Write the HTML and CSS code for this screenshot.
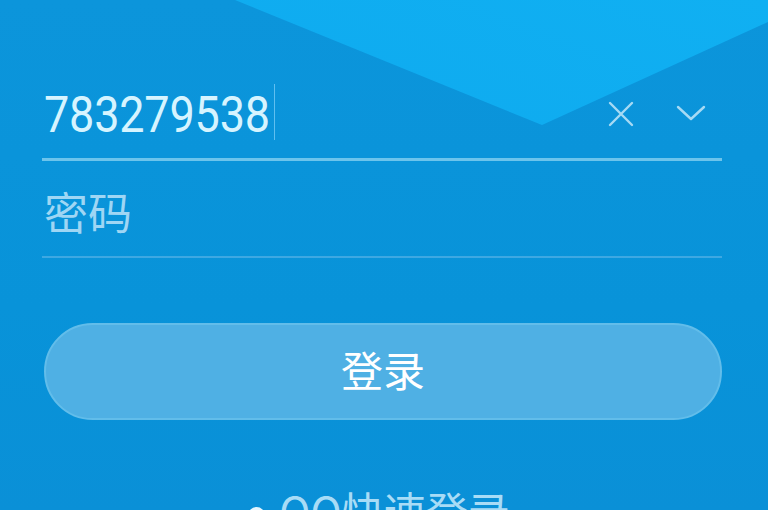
FILE: index.html
```html
<!DOCTYPE html>
<html lang="zh-CN">
<head>
<meta charset="utf-8">
<title>登录</title>
<link rel="stylesheet" href="styles.css">
</head>
<body>
<div class="screen">
  <div class="bg-shape"></div>
  <form class="login">
    <div class="field field-user">
      <span class="value">783279538</span><span class="caret"></span>
      <span class="spacer"></span>
      <svg class="icon icon-clear" viewBox="0 0 28 28" width="28" height="28"><path d="M3 3 L25 25 M25 3 L3 25" fill="none" stroke="currentColor" stroke-width="2.4" stroke-linecap="round"/></svg>
      <svg class="icon icon-down" viewBox="0 0 32 18" width="32" height="18"><path d="M3 3 L16 15 L29 3" fill="none" stroke="currentColor" stroke-width="2.4" stroke-linecap="round" stroke-linejoin="round"/></svg>
    </div>
    <div class="field field-pass">
      <span class="placeholder">密码</span>
    </div>
    <button type="button" class="btn-login">登录</button>
    <div class="quick"><span class="dot"></span>QQ快速登录</div>
  </form>
</div>
</body>
</html>
```
FILE: styles.css
```css
html, body {
  margin: 0;
  padding: 0;
}
body {
  width: 768px;
  height: 510px;
  overflow: hidden;
  font-family: Roboto, "Noto Sans CJK SC", sans-serif;
}
.screen {
  position: relative;
  width: 768px;
  height: 510px;
  overflow: hidden;
  background: linear-gradient(180deg, #0c95db 0%, #0893d9 60%, #0a90d7 100%);
}
.bg-shape {
  position: absolute;
  inset: 0;
  background: linear-gradient(200deg, #10b0f2 0%, #0ea7ed 60%, #0ca0e7 100%);
  clip-path: polygon(235px 0, 768px 0, 768px 22px, 542px 125px);
}
.login {
  position: relative;
  padding: 80px 46px 0 42px;
  display: flex;
  flex-direction: column;
}
.field {
  display: flex;
  align-items: center;
}
.field-user {
  height: 78px;
  border-bottom: 3px solid #6cc4ec;
  padding-left: 2px;
}
.value {
  font-family: Roboto, sans-serif;
  font-size: 45px;
  letter-spacing: -0.2px;
  color: #d6f4ff;
  line-height: 1;
  transform: scaleY(1.1);
  margin-top: -9px;
}
.caret {
  width: 1.5px;
  height: 56px;
  background: #5fbff0;
  margin-left: 4px;
  margin-top: -14px;
}
.spacer {
  flex: 1;
}
.icon {
  color: #a6daf4;
  display: block;
}
.icon-clear {
  margin-right: 40px;
  margin-top: -10px;
}
.icon-down {
  margin-right: 15px;
  margin-top: -12px;
}
.field-pass {
  height: 95px;
  border-bottom: 2px solid #3ea8e2;
  padding-left: 2px;
}
.placeholder {
  font-family: "Noto Sans CJK SC", sans-serif;
  font-size: 44px;
  line-height: 1;
  color: #9fd6f4;
  margin-top: 4px;
}
.btn-login {
  margin: 65px 0 0 2px;
  height: 97px;
  border: 2px solid #62bdea;
  border-radius: 49px;
  background: #4fb0e4;
  color: #ffffff;
  font-family: "Noto Sans CJK SC", sans-serif;
  font-size: 42px;
  padding: 0 0 6px;
  cursor: pointer;
}
.quick {
  margin-top: 69px;
  display: flex;
  align-items: center;
  justify-content: center;
  font-family: "Noto Sans CJK SC", sans-serif;
  font-size: 42px;
  line-height: 1;
  color: #a8dcf6;
  padding-right: 6px;
}
.dot {
  width: 17px;
  height: 17px;
  border-radius: 50%;
  background: #e4f6ff;
  margin-right: 14px;
  margin-top: 10px;
}
```
